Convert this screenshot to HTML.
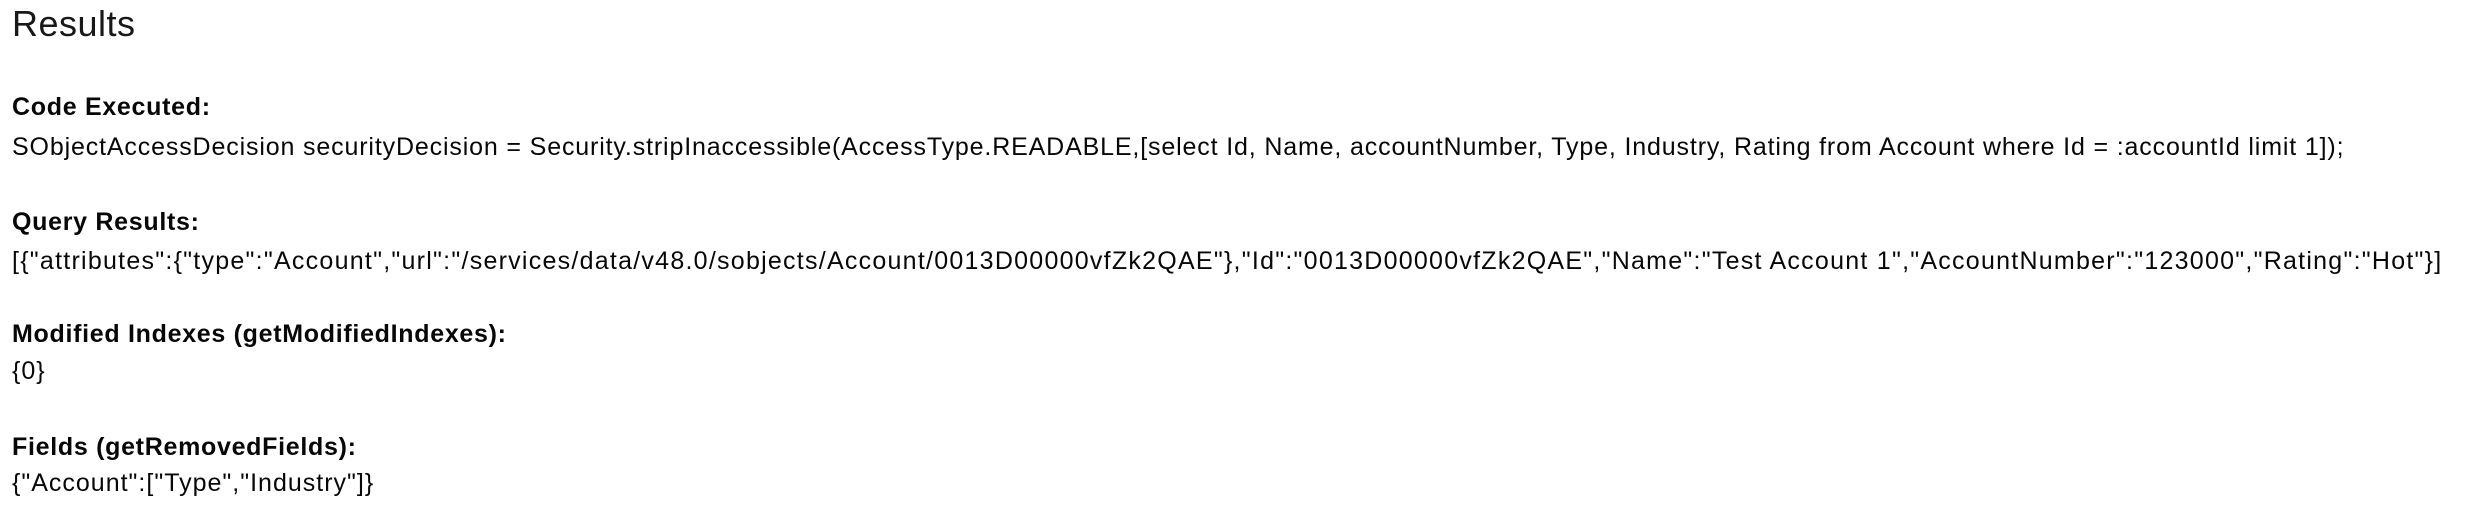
<!DOCTYPE html>
<html><head><meta charset="utf-8"><style>
body{margin:0;width:2480px;height:518px;background:#fff;overflow:hidden;font-family:"Liberation Sans",sans-serif;color:#080707;}
div{position:absolute;left:12px;white-space:nowrap;line-height:1;font-size:25px;letter-spacing:1px}
.t{font-size:36px;font-weight:300;color:#181818;letter-spacing:0.5px}
.b{font-weight:bold;letter-spacing:0.7px}
</style></head><body>
<div class="t" style="top:6px">Results</div>
<div class="b" style="top:95px">Code Executed:</div>
<div style="top:135px;letter-spacing:0.85px">SObjectAccessDecision securityDecision = Security.stripInaccessible(AccessType.READABLE,[select Id, Name, accountNumber, Type, Industry, Rating from Account where Id = :accountId limit 1]);</div>
<div class="b" style="top:210px">Query Results:</div>
<div style="top:249px;letter-spacing:1.25px">[{"attributes":{"type":"Account","url":"/services/data/v48.0/sobjects/Account/0013D00000vfZk2QAE"},"Id":"0013D00000vfZk2QAE","Name":"Test Account 1","AccountNumber":"123000","Rating":"Hot"}]</div>
<div class="b" style="top:322px">Modified Indexes (getModifiedIndexes):</div>
<div style="top:359px">{0}</div>
<div class="b" style="top:435px">Fields (getRemovedFields):</div>
<div style="top:471px">{"Account":["Type","Industry"]}</div>
</body></html>
